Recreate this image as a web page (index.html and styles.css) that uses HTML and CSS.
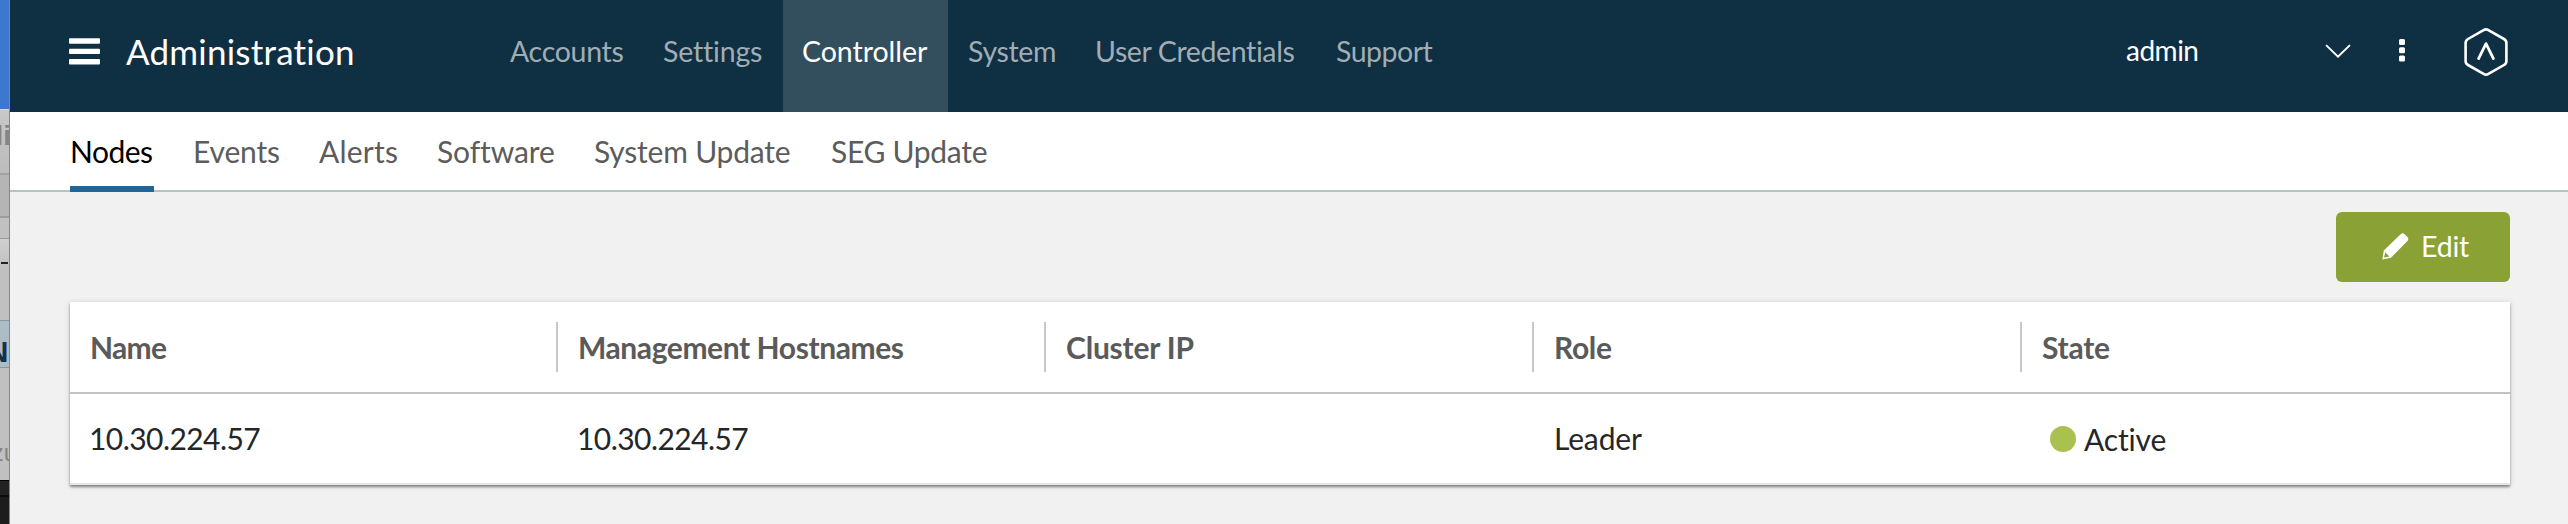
FILE: index.html
```
<!DOCTYPE html>
<html lang="en">
<head>
<meta charset="utf-8">
<title>Administration</title>
<link rel="stylesheet" href="styles.css">
</head>
<body>
<div class="desktop">
  <aside class="behind">
    <div class="behind-blue"></div>
    <div class="behind-title"><span>li</span></div>
    <div class="behind-bar"></div>
    <div class="behind-row"></div>
    <div class="behind-list"><span class="dash"></span></div>
    <div class="behind-selected"><span>N</span></div>
    <div class="behind-footer"><span>zu</span></div>
    <div class="behind-dark"></div>
  </aside>
  <div class="window">
    <header class="topbar">
      <svg class="menu" width="31" height="27" viewBox="0 0 31 27"><g fill="#fff"><rect y="0.3" width="31" height="5.4" rx="1"/><rect y="10.7" width="31" height="5.4" rx="1"/><rect y="21.1" width="31" height="5.4" rx="1"/></g></svg>
      <h1 class="title">Administration</h1>
      <nav class="nav">
        <a class="nav-item accounts">Accounts</a>
        <a class="nav-item settings">Settings</a>
        <a class="nav-item controller active">Controller</a>
        <a class="nav-item system">System</a>
        <a class="nav-item credentials">User Credentials</a>
        <a class="nav-item support">Support</a>
      </nav>
      <div class="tools">
        <span class="user">admin</span>
        <svg class="chevron" width="26" height="15" viewBox="0 0 26 15"><path d="M1.6 1.6 13 12.6 24.4 1.6" fill="none" stroke="#fff" stroke-width="2" stroke-linecap="round"/></svg>
        <svg class="dots" width="6" height="23" viewBox="0 0 6 23"><g fill="#fff"><rect width="6" height="6" rx="1.5"/><rect y="8.2" width="6" height="6" rx="1.5"/><rect y="16.5" width="6" height="6" rx="1.5"/></g></svg>
        <svg class="brand" width="44" height="48" viewBox="0 0 44 48"><g fill="none" stroke="#fff" stroke-linecap="round" stroke-linejoin="round"><path stroke-width="2.6" d="M19.6 2.1Q22 .7 24.4 2.1L40 11Q42.4 12.4 42.4 15V33Q42.4 35.6 40 37L24.4 45.9Q22 47.3 19.6 45.9L4 37Q1.6 35.6 1.6 33V15Q1.6 12.4 4 11Z"/><path stroke-width="2.8" d="M14.6 30.6 22 15.6 29.4 30.6"/></g></svg>
      </div>
    </header>
    <nav class="tabs">
      <a class="tab nodes current">Nodes</a>
      <a class="tab events">Events</a>
      <a class="tab alerts">Alerts</a>
      <a class="tab software">Software</a>
      <a class="tab update">System Update</a>
      <a class="tab seg">SEG Update</a>
    </nav>
    <main class="content">
      <div class="actions">
        <button class="edit">
          <svg width="27" height="27" viewBox="0 0 27 27"><path fill="#fff" fill-rule="evenodd" d="M.3 26.5 1.8 17.6 18.6 1.2Q20.6-.5 22.6 1.2L25.4 4Q27.2 6 25.4 8L9 24.8ZM3.3 19.2 2 24.5 7.3 23.6Z"/></svg>
          <span>Edit</span>
        </button>
      </div>
      <section class="table">
        <div class="row head">
          <div class="cell name">Name</div>
          <div class="cell hosts">Management Hostnames</div>
          <div class="cell cluster">Cluster IP</div>
          <div class="cell role">Role</div>
          <div class="cell state">State</div>
        </div>
        <div class="row body">
          <div class="cell ip">10.30.224.57</div>
          <div class="cell ip">10.30.224.57</div>
          <div class="cell"></div>
          <div class="cell leader">Leader</div>
          <div class="cell status"><i class="dot"></i><span>Active</span></div>
        </div>
      </section>
    </main>
  </div>
</div>
</body>
</html>
```
FILE: styles.css
```
* { box-sizing: border-box; }
body { margin: 0; font-family: Lato, sans-serif; background: #f1f1f1; }
svg { display: block; flex: none; }
.desktop { display: flex; width: 2568px; height: 524px; overflow: hidden; }

/* sliver of the windows lying behind */
.behind { flex: none; width: 10px; height: 524px; overflow: hidden; display: flex; flex-direction: column; border-right: 1px solid #858585; background: #c2c2c2; }
.behind > div { flex: none; overflow: hidden; display: flex; justify-content: flex-end; }
.behind-blue { height: 109px; background: #3d78cc; }
.behind-title { height: 66px; background: linear-gradient(#c8c8c8, #bcbcbc); border-top: 1px solid #dadada; border-bottom: 2px solid #a2a2a2; }
.behind-title span { font: 700 28px/52px "Liberation Sans", sans-serif; color: #858585; margin-right: -2px; }
.behind-bar { height: 43px; background: #b5b5b5; border-bottom: 2px solid #9c9c9c; }
.behind-row { height: 21px; background: #c1c1c1; border-bottom: 1px solid #989898; }
.behind-list { height: 81px; background: linear-gradient(#d0d0d0, #c0c0c0 30px); }
.behind-list .dash { width: 7px; height: 2px; margin: 23px 1px 0 0; background: #222; }
.behind-selected { height: 48px; background: #acbdc6; border-top: 1px solid #84999f; border-bottom: 1px solid #84999f; }
.behind-selected span { font: 700 30px/62px "Liberation Sans", sans-serif; color: #16304f; margin-right: .5px; }
.behind-footer { height: 112px; background: #c0c0c0; }
.behind-footer span { font: 24px/169px "Liberation Sans", sans-serif; color: #858585; margin-right: -8px; }
.behind-dark { height: 44px; background: linear-gradient(#000 1px, #222 1px, #222 15px, #0b0b0b 15px, #0b0b0b 17px, #1d1d1d 17px); }

.window { flex: none; width: 2558px; height: 524px; background: #f1f1f1; }

.topbar { display: flex; align-items: center; height: 112px; padding-left: 59px; background: #0f2f43; }
.menu { margin-bottom: 9px; }
.title { margin: 0 0 11px 26px; width: 364px; font-size: 35px; font-weight: 400; line-height: 42px; letter-spacing: .22px; color: #fff; white-space: nowrap; }
.nav { display: grid; grid-template-columns: 154px 139px 165px 128px 240px 136px; height: 112px; }
.nav-item { height: 112px; padding-left: 20px; font-size: 28.5px; line-height: 102px; color: #a0adb5; white-space: nowrap; }
.nav-item.settings { padding-left: 19px; }
.nav-item.active { background: #334f5e; color: #fff; padding-left: 19px; }
.accounts { letter-spacing: -.3px; }
.settings { letter-spacing: -.18px; }
.controller { letter-spacing: -.03px; }
.system { letter-spacing: -.34px; }
.nav-item.credentials { letter-spacing: -.38px; padding-left: 19px; }
.support { letter-spacing: -.5px; }
.tools { display: flex; align-items: center; margin-left: 674px; height: 112px; padding-bottom: 11px; }
.user { width: 199px; font-size: 28px; line-height: 101px; letter-spacing: -.5px; color: #fff; }
.chevron { margin-top: 2px; }
.dots { margin-left: 48px; }
.brand { margin: 2px 0 0 59px; }

.tabs { display: grid; grid-template-columns: 123px 126px 118px 157px 237px 160px; height: 80px; padding-left: 60px; background: #fff; border-bottom: 2px solid #b5c3c4; }
.tab { font-size: 30px; line-height: 78px; color: #5c5c5c; white-space: nowrap; }
.tab.current { width: 84px; height: 80px; color: #000; border-bottom: 6px solid #1f6797; }
.nodes { letter-spacing: -.52px; }
.events { letter-spacing: -.16px; }
.alerts { letter-spacing: .23px; }
.software { letter-spacing: -.1px; }
.update { letter-spacing: -.2px; }
.seg { letter-spacing: -.3px; }

.content { padding: 20px 58px 0 60px; }
.actions { display: flex; justify-content: flex-end; height: 90px; }
.edit { display: flex; align-items: center; width: 174px; height: 70px; padding: 0 0 2px 46px; border: 0; border-radius: 6px; background: #8aa135; color: #fff; font: 28.5px/34px Lato, sans-serif; letter-spacing: -.22px; }
.edit span { margin: 0 0 1px 12px; }
.table { height: 183px; background: #fff; border-bottom: 2px solid #e5e7e7; box-shadow: 0 2px 2px rgba(0, 0, 0, .38), 0 1px 6px rgba(0, 0, 0, .16); }
.row { display: grid; grid-template-columns: repeat(5, 488px); }
.head { height: 92px; padding: 20px 0; border-bottom: 2px solid #c4c4c4; }
.head .cell { padding-left: 20px; font-size: 30px; font-weight: 700; line-height: 50px; color: #5a5a5a; border-right: 2px solid #c8c8c8; height: 50px; }
.head .cell:last-child { border-right: 0; }
.name { letter-spacing: -.69px; }
.hosts { letter-spacing: -.42px; }
.cluster { letter-spacing: -.2px; }
.role { letter-spacing: -.33px; }
.state { letter-spacing: -.25px; }
.body .cell { height: 89px; padding-left: 20px; font-size: 30px; line-height: 88px; color: #242628; }
.body .ip { letter-spacing: -.56px; padding-left: 19px; }
.leader { letter-spacing: -.14px; }
.body .status { display: flex; align-items: center; padding-left: 28px; letter-spacing: -.15px; }
.dot { width: 26px; height: 26px; border-radius: 50%; background: #aac14f; margin-right: 8px; }
```
